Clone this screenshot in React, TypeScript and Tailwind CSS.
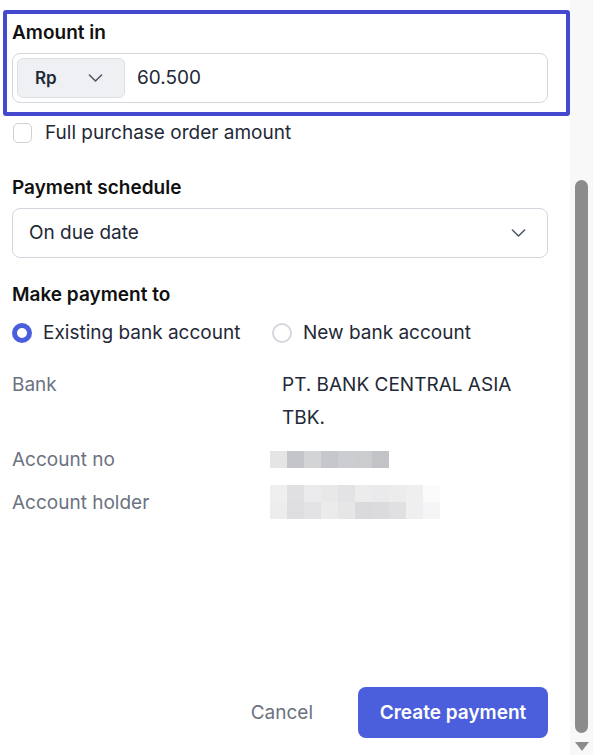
import React from "react";

const Chevron = ({ className }: { className?: string }) => (
  <svg className={className} viewBox="0 0 16 10" fill="none" stroke="currentColor" strokeWidth="1.6" strokeLinecap="round" strokeLinejoin="round">
    <path d="M1.5 1.8 8 8.2l6.5-6.4" />
  </svg>
);

const accNo = [
  "bg-[#e5e5e5]",
  "bg-[#c4c5c9]",
  "bg-[#d3d4d6]",
  "bg-[#c6c7ca]",
  "bg-[#cbcdd1]",
  "bg-[#cbccce]",
  "bg-[#c2c3c6]",
];
const holder1 = [
  "bg-[#efefef]",
  "bg-[#e0e0e2]",
  "bg-[#ebebed]",
  "bg-[#e8e8e8]",
  "bg-[#e3e3e5]",
  "bg-[#ececec]",
  "bg-[#eaeaec]",
  "bg-[#ececec]",
  "bg-[#efefef]",
  "bg-[#fbfbfb]",
];
const holder2 = [
  "bg-[#ededed]",
  "bg-[#dedee0]",
  "bg-[#e3e3e5]",
  "bg-[#ebebeb]",
  "bg-[#e6e6e6]",
  "bg-[#dadadd]",
  "bg-[#dbdbdd]",
  "bg-[#e0e0e2]",
  "bg-[#efefef]",
  "bg-[#f4f5f7]",
];

export default function App() {
  return (
    <div
      className="flex w-[593px] h-[755px] bg-white overflow-hidden text-[19px] leading-[24px] text-[#1f2937]"
      style={{ fontFamily: "Inter, 'Noto Sans', sans-serif" }}
    >
      <div className="w-[570px] flex flex-col">
        {/* Amount in (focused) */}
        <div className="mt-[10px] ml-[3px] w-[567px] border-4 border-[#4549d0] rounded-[3px] pl-[5px] pr-[18px] pt-[7px] pb-[9px]">
          <div className="text-[19px] font-semibold text-[#111111] leading-[24px]">Amount in</div>
          <div className="mt-[8px] h-[50px] flex items-center border border-[#d4d7de] rounded-[8px] pl-[4px]">
            <div className="w-[108px] h-[40px] flex items-center justify-between pl-[17px] pr-[21px] bg-[#eef0f3] border border-[#dcdfe4] rounded-[6px]">
              <span className="text-[17px] font-semibold text-[#1f2937]">Rp</span>
              <Chevron className="w-[15px] h-[10px] text-[#4b5563]" />
            </div>
            <span className="ml-[12px] text-[19px] text-[#1f2937]">60.500</span>
          </div>
        </div>

        {/* checkbox */}
        <div className="mt-[7px] ml-[13px] flex items-center h-[20px]">
          <div className="w-[19px] h-[20px] border-[1.5px] border-[#cdd1d8] rounded-[5px]" />
          <span className="ml-[13px] text-[19px] text-[#1f2937] leading-[20px]">Full purchase order amount</span>
        </div>

        <div className="pl-[12px] pr-[22px]">
          <div className="mt-[33px] text-[19px] font-semibold text-[#111111] leading-[24px]">Payment schedule</div>
          <div className="mt-[8px] h-[50px] flex items-center justify-between border border-[#d4d7de] rounded-[8px] pl-[16px] pr-[21px]">
            <span className="text-[19px] text-[#1f2937]">On due date</span>
            <Chevron className="w-[15px] h-[10px] text-[#4b5563]" />
          </div>

          <div className="mt-[25px] text-[19px] font-semibold text-[#111111] leading-[24px]">Make payment to</div>
          <div className="mt-[14px] flex items-center h-[24px]">
            <div className="w-[260px] flex items-center">
              <div className="w-[20px] h-[20px] rounded-full border-[5px] border-[#4b5fdc] bg-white" />
              <span className="ml-[11px]">Existing bank account</span>
            </div>
            <div className="w-[20px] h-[20px] rounded-full border-2 border-[#d4d7de] bg-white" />
            <span className="ml-[11px]">New bank account</span>
          </div>

          <div className="mt-[23px] flex">
            <div className="w-[270px] text-[#6b7280] leading-[33px]">Bank</div>
            <div className="text-[#1f2937] leading-[33px] w-[250px]">PT. BANK CENTRAL ASIA TBK.</div>
          </div>
          <div className="mt-[9px] flex items-center">
            <div className="w-[258px] text-[#6b7280] leading-[33px]">Account no</div>
            <div className="flex">
              {accNo.map((c, i) => (
                <div key={i} className={`w-[17px] h-[17px] ${c}`} />
              ))}
            </div>
          </div>
          <div className="mt-[9px] flex items-center">
            <div className="w-[258px] text-[#6b7280] leading-[33px]">Account holder</div>
            <div className="flex flex-col">
              <div className="flex">
                {holder1.map((c, i) => (
                  <div key={i} className={`w-[17px] h-[17px] ${c}`} />
                ))}
              </div>
              <div className="flex">
                {holder2.map((c, i) => (
                  <div key={i} className={`w-[17px] h-[17px] ${c}`} />
                ))}
              </div>
            </div>
          </div>
        </div>

        <div className="mt-auto mb-[17px] pr-[22px] flex items-center justify-end">
          <button className="text-[19px] text-[#6b7280] mr-[45px]">Cancel</button>
          <button className="w-[190px] h-[51px] rounded-[8px] bg-[#4b5fdc] text-white text-[19px] font-semibold">
            Create payment
          </button>
        </div>
      </div>

      {/* scrollbar */}
      <div className="w-[23px] bg-[#f8f8f8] flex flex-col items-center">
        <div className="mt-[180px] w-[13px] h-[553px] rounded-full bg-[#8c8c8c]" />
        <div className="mt-[9px] w-0 h-0 border-l-[7px] border-r-[7px] border-t-[9px] border-l-transparent border-r-transparent border-t-[#8c8c8c]" />
      </div>
    </div>
  );
}
